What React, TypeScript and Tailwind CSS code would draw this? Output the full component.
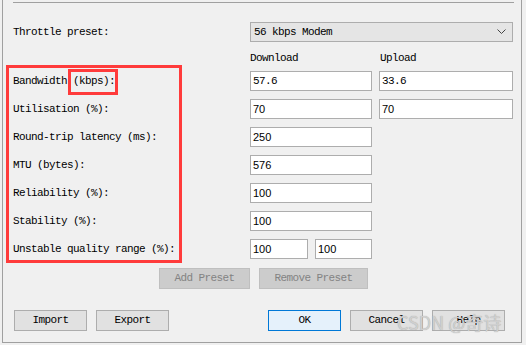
import React from "react";

const mono = { fontFamily: '"Liberation Mono", "DejaVu Sans Mono", monospace' };
const sans = { fontFamily: '"Liberation Sans", Arial, sans-serif' };

function Input({ value, w, monoText }: { value: string; w: string; monoText?: boolean }) {
  return (
    <div
      className={`${w} h-[20px] bg-white border border-[#adadad] flex items-center pl-[2px] text-[11px] text-black leading-none`}
      style={monoText ? mono : sans}
    >
      <span className={monoText ? "tracking-[-0.6px]" : ""}>{value}</span>
    </div>
  );
}

function Btn({ label, className }: { label: string; className: string }) {
  return (
    <div
      className={`h-[21px] flex items-center justify-center text-[11px] tracking-[-0.6px] leading-none ${className}`}
      style={mono}
    >
      {label}
    </div>
  );
}

const rows: { label: string; inputs: { v: string; w: string; mono?: boolean }[] }[] = [
  { label: "Bandwidth (kbps):", inputs: [{ v: "57.6", w: "w-[122px]", mono: true }, { v: "33.6", w: "w-[134px]", mono: true }] },
  { label: "Utilisation (%):", inputs: [{ v: "70", w: "w-[122px]" }, { v: "70", w: "w-[134px]" }] },
  { label: "Round-trip latency (ms):", inputs: [{ v: "250", w: "w-[122px]" }] },
  { label: "MTU (bytes):", inputs: [{ v: "576", w: "w-[122px]" }] },
  { label: "Reliability (%):", inputs: [{ v: "100", w: "w-[122px]" }] },
  { label: "Stability (%):", inputs: [{ v: "100", w: "w-[122px]" }] },
  { label: "Unstable quality range (%):", inputs: [{ v: "100", w: "w-[58px]" }, { v: "100", w: "w-[57px]" }] },
];

export default function App() {
  return (
    <div className="w-[526px] h-[345px] bg-[#f0f0f0] relative overflow-hidden text-black">
      <div className="ml-[2px] w-[520px] h-[343px] border-l border-r border-b border-[#a0a0a0] flex flex-col">
        <div className="ml-[10px] mt-[2px] w-[501px] h-px bg-[#a0a0a0]" />
        {/* throttle preset */}
        <div className="mt-[19px] flex items-center h-[20px]">
          <div className="w-[247px] pl-[10px] pt-[1px] text-[11px] tracking-[-0.6px]" style={mono}>
            Throttle preset:
          </div>
          <div className="w-[263px] h-[20px] bg-[#e5e5e5] border border-[#adadad] flex items-center justify-between pl-[3px] pr-[6px]">
            <span className="text-[11px] tracking-[-0.6px]" style={mono}>56 kbps Modem</span>
            <svg width="9" height="6" viewBox="0 0 9 6">
              <path d="M0.5 0.5 L4.5 4.5 L8.5 0.5" fill="none" stroke="#444" strokeWidth="1" />
            </svg>
          </div>
        </div>
        {/* headers */}
        <div className="flex items-center h-[29px] pt-[3px]">
          <div className="w-[247px]" />
          <div className="w-[130px] text-[11px] tracking-[-0.6px]" style={mono}>Download</div>
          <div className="text-[11px] tracking-[-0.6px]" style={mono}>Upload</div>
        </div>
        {/* rows */}
        <div className="flex flex-col gap-[8px]">
          {rows.map((r) => (
            <div key={r.label} className="flex items-center h-[20px]">
              <div className="w-[247px] pl-[10px] pt-[1px] text-[11px] tracking-[-0.6px] whitespace-nowrap" style={mono}>
                {r.label}
              </div>
              <div className="flex gap-[7px]">
                {r.inputs.map((i, k) => (
                  <Input key={k} value={i.v} w={i.w} monoText={i.mono} />
                ))}
              </div>
            </div>
          ))}
        </div>
        {/* preset buttons */}
        <div className="mt-[9px] flex gap-[9px] pl-[156px]">
          <Btn label="Add Preset" className="w-[91px] h-[20px] bg-[#cccccc] border border-[#bfbfbf] text-[#838383]" />
          <Btn label="Remove Preset" className="w-[109px] h-[20px] bg-[#cccccc] border border-[#bfbfbf] text-[#838383]" />
        </div>
        {/* bottom buttons */}
        <div className="mt-[21px] flex pl-[11px]">
          <div className="flex gap-[9px]">
            <Btn label="Import" className="w-[73px] bg-[#e1e1e1] border border-[#adadad]" />
            <Btn label="Export" className="w-[73px] bg-[#e1e1e1] border border-[#adadad]" />
          </div>
          <div className="ml-[99px] flex gap-[9px]">
            <Btn label="OK" className="w-[73px] bg-[#e5f1fb] border border-[#0078d7]" />
            <Btn label="Cancel" className="w-[73px] bg-[#e1e1e1] border border-[#adadad]" />
            <Btn label="Help" className="w-[73px] bg-[#e1e1e1] border border-[#adadad]" />
          </div>
        </div>
      </div>

      {/* red annotation boxes */}
      <div className="absolute left-[6px] top-[65px] w-[176px] h-[198px] border-[3px] border-[#ff3b3b] pointer-events-none" />
      <div className="absolute left-[68px] top-[69px] w-[50px] h-[26px] border-[3px] border-[#ff3b3b] pointer-events-none" />

      {/* watermark */}
      <div
        className="absolute left-[397px] top-[313px] text-[18px] leading-none text-[#d6d6d6]/90 pointer-events-none"
        style={{ fontFamily: '"Noto Sans CJK SC", "Liberation Sans", sans-serif', textShadow: "0 0 1px #9a9a9a" }}
      >
        CSDN @奇诗
      </div>
    </div>
  );
}
